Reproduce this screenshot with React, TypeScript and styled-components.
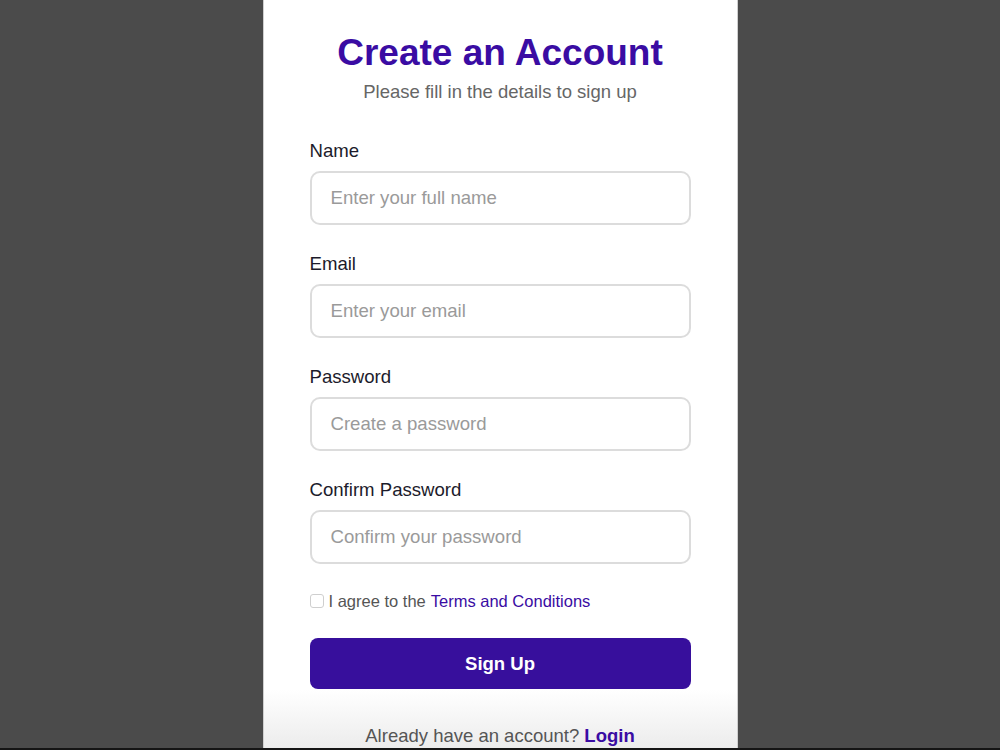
import React from "react";
import styled, { createGlobalStyle } from "styled-components";

const GlobalStyle = createGlobalStyle`
  html, body { margin: 0; padding: 0; }
  body {
    background: #4b4b4b;
    font-family: "Liberation Sans", Arial, Helvetica, sans-serif;
    overflow: hidden;
  }
  * { box-sizing: border-box; }
`;

const Page = styled.div`
  height: 750px;
  display: flex;
  justify-content: center;
  border-bottom: 2px solid #151515;
`;

const Card = styled.div`
  width: 475px;
  height: 748px;
  background: linear-gradient(to bottom, #ffffff 0, #ffffff 690px, #ececec 748px);
  border-left: 1px solid #cfcfcf;
  border-right: 1px solid #cfcfcf;
  padding: 31px 46px 0;
  display: flex;
  flex-direction: column;
`;

const Title = styled.h1`
  margin: 0;
  text-align: center;
  color: #3a0ca3;
  font-size: 37px;
  font-weight: 700;
  line-height: 44px;
`;

const Subtitle = styled.p`
  margin: 5px 0 0;
  text-align: center;
  color: #666;
  font-size: 18.5px;
  line-height: 24px;
`;

const Form = styled.form`
  margin-top: 35px;
  display: flex;
  flex-direction: column;
`;

const Field = styled.div`
  display: flex;
  flex-direction: column;
  margin-bottom: 27px;
`;

const Label = styled.label`
  color: #1c1b2b;
  font-size: 18.6px;
  line-height: 24px;
  margin-bottom: 8px;
`;

const Input = styled.input`
  height: 54px;
  width: 100%;
  border: 2px solid #dcdcdc;
  border-radius: 10px;
  padding: 0 19px;
  font-size: 18.6px;
  font-family: inherit;
  color: #222;
  outline: none;
  &::placeholder { color: #9a9a9a; }
`;

const CheckRow = styled.label`
  display: flex;
  align-items: center;
  gap: 5px;
  margin-top: 0;
  font-size: 16.5px;
  line-height: 20px;
  color: #555;
`;

const Box = styled.span`
  width: 14px;
  height: 14px;
  border: 1px solid #cfcfcf;
  border-radius: 3px;
  background: #fff;
  display: inline-block;
`;

const Link = styled.a<{ $bold?: boolean }>`
  color: #3a0ca3;
  text-decoration: none;
  font-weight: ${(p) => (p.$bold ? 700 : 400)};
`;

const Button = styled.button`
  margin-top: 27px;
  height: 51px;
  width: 100%;
  border: none;
  border-radius: 8px;
  background: #370f9c;
  color: #fff;
  font-family: inherit;
  font-size: 18.5px;
  font-weight: 700;
`;

const Footer = styled.p`
  margin: 35px 0 0;
  text-align: center;
  font-size: 18.5px;
  color: #555;
  line-height: 24px;
`;

const fields = [
  { label: "Name", placeholder: "Enter your full name", type: "text" },
  { label: "Email", placeholder: "Enter your email", type: "email" },
  { label: "Password", placeholder: "Create a password", type: "password" },
  { label: "Confirm Password", placeholder: "Confirm your password", type: "password" },
];

export default function App() {
  return (
    <>
      <GlobalStyle />
      <Page>
        <Card>
          <Title>Create an Account</Title>
          <Subtitle>Please fill in the details to sign up</Subtitle>
          <Form onSubmit={(e) => e.preventDefault()}>
            {fields.map((f) => (
              <Field key={f.label}>
                <Label>{f.label}</Label>
                <Input type={f.type} placeholder={f.placeholder} />
              </Field>
            ))}
            <CheckRow>
              <Box />
              I agree to the <Link href="#">Terms and Conditions</Link>
            </CheckRow>
            <Button type="submit">Sign Up</Button>
          </Form>
          <Footer>
            Already have an account? <Link href="#" $bold>Login</Link>
          </Footer>
        </Card>
      </Page>
    </>
  );
}
